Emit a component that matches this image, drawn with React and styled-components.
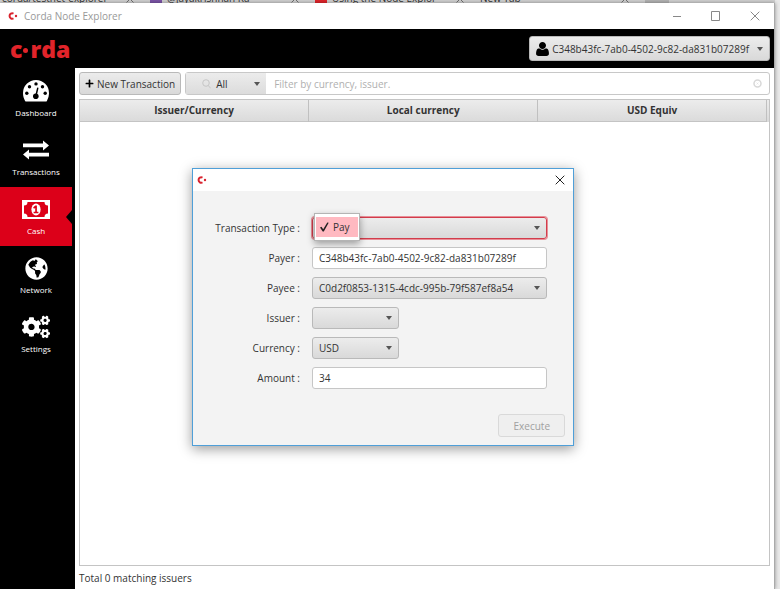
import React from 'react';
import styled, { createGlobalStyle, css } from 'styled-components';
import { FaCogs, FaGlobeAmericas, FaPlus } from 'react-icons/fa';

const PARTY = 'C348b43fc-7ab0-4502-9c82-da831b07289f';
const PAYEE = 'C0d2f0853-1315-4cdc-995b-79f587ef8a54';

const GaugeIcon = () => (
  <svg width="26" height="22" viewBox="0 0 26 22">
    <path
      fill="#fff"
      d="M13 0a13 13 0 0 0-13 13c0 3 .8 5.600 2.100 7.900.3.500.7.700 1.200.700h19.400c.5 0 .9-.2 1.200-.7A14.500 14.500 0 0 0 26 13 13 13 0 0 0 13 0z"
    />
    <circle cx="3.800" cy="13.300" r="1.700" />
    <circle cx="6.500" cy="6.700" r="1.700" />
    <circle cx="13" cy="3.900" r="1.700" />
    <circle cx="19.500" cy="6.700" r="1.700" />
    <circle cx="22.200" cy="13.300" r="1.700" />
    <circle cx="12.800" cy="16.200" r="2.800" />
    <path d="M13 15.500 14.700 8.300" stroke="#000" strokeWidth="1.500" strokeLinecap="round" />
  </svg>
);

const ExchangeIcon = () => (
  <svg width="26" height="20" viewBox="0 0 26 20" fill="#fff">
    <path d="M0 3.600h20V.5l6 5-6 5V7.200H0z" />
    <path d="M26 12.800H6V9.600l-6 5 6 5v-3.200h20z" />
  </svg>
);

const CashIcon = () => (
  <svg width="28" height="19" viewBox="0 0 28 19">
    <path fill="#fff" d="M0 0h28v19H0z" />
    <path fill="#dc0019" d="M5.500 2h17a3.500 3.500 0 0 0 3.500 3.500v8a3.500 3.500 0 0 0-3.500 3.500h-17A3.500 3.500 0 0 0 2 13.500v-8A3.500 3.500 0 0 0 5.500 2z" />
    <ellipse cx="14" cy="9.500" rx="4.600" ry="6" fill="#fff" />
    <path fill="#dc0019" d="M13.200 5.500h1.700v6.200h1.500v1.500h-4.800v-1.500h1.600V7.900l-1.200.9-.9-1.200z" />
  </svg>
);

const UserIcon = () => (
  <svg width="13" height="14" viewBox="0 128 1408 1536">
    <path d="M1408 1405q0 120-73 189.500t-194 69.500h-874q-121 0-194-69.500t-73-189.500q0-53 3.500-103.500t14-109 26.500-108.500 43-97.500 62-81 85.500-53.500 111.500-20q9 0 42 21.500t74.500 48 108 48 133.500 21.500 133.500-21.500 108-48 74.500-48 42-21.500q61 0 111.500 20t85.500 53.500 62 81 43 97.500 26.500 108.500 14 109 3.500 103.500zM1088 512q0 159-112.500 271.500t-271.500 112.500-271.500-112.500-112.500-271.500 112.500-271.500 271.500-112.500 271.500 112.500 112.500 271.500z" />
  </svg>
);

const SearchIcon = () => (
  <svg width="9" height="10" viewBox="0 0 9 10" fill="none" stroke="#c6c6c6">
    <circle cx="4" cy="4" r="3.300" />
    <path d="m6.300 6.500 2.300 2.800" />
  </svg>
);

const ClearIcon = () => (
  <svg width="9" height="9" viewBox="0 0 9 9" fill="none" stroke="#d8d8d8">
    <circle cx="4.500" cy="4.500" r="3.500" strokeWidth="1.500" />
    <path d="m3.500 3.500 2 2m0-2-2 2" strokeWidth=".5" />
  </svg>
);

const CordaMark = () => (
  <svg width="10" height="8" viewBox="0 0 10 8">
    <path d="M5.500 1.600A2.700 2.700 0 1 0 5.500 6.400" fill="none" stroke="#d9232e" strokeWidth="2" />
    <circle cx="8" cy="4" r="1.200" fill="#d9232e" />
  </svg>
);

const CheckIcon = () => (
  <svg width="9" height="10" viewBox="0 0 9 10">
    <path d="M0 5.600 1.500 4.800 3.200 7.200 7.300.400 8.700.700 3.800 9.600H2.700z" fill="#222" />
  </svg>
);

const MinimizeIcon = () => (
  <svg width="10" height="10" viewBox="0 0 10 10">
    <path d="M1 5.500h8" stroke="#888" />
  </svg>
);

const MaximizeIcon = () => (
  <svg width="10" height="10" viewBox="0 0 10 10">
    <path d="M.5.5h8v9h-8z" fill="none" stroke="#888" />
  </svg>
);

const CloseIcon = ({ color = '#888', size = 10 }) => (
  <svg width={size} height={size} viewBox="0 0 10 10">
    <path d="m.7.7 8.600 8.600m0-8.600L.7 9.300" stroke={color} />
  </svg>
);

const tabs = [
  { label: 'corda/testnet-explorer', icon: 'transparent' },
  { label: '@jayakrishnan Ka', icon: '#7d55a8' },
  { label: 'Using the Node Explor', icon: '#e1242a' },
  { label: 'New Tab' },
];

const menu = [
  { label: 'Dashboard', icon: <GaugeIcon /> },
  { label: 'Transactions', icon: <ExchangeIcon /> },
  { label: 'Cash', icon: <CashIcon />, active: true },
  { label: 'Network', icon: <FaGlobeAmericas size={23} /> },
  { label: 'Settings', icon: <FaCogs size={28} /> },
];

const App = () => {
  return (
    <>
      <GlobalStyle />
      <Desktop>
        <BrowserTabs aria-hidden="true">
          {tabs.map(({ label, icon }) => (
            <BrowserTab key={label}>
              {icon && <TabIcon $color={icon} />}
              {label}
              <TabClose>
                <CloseIcon color="#555" size={8} />
              </TabClose>
            </BrowserTab>
          ))}
          <NewTab />
        </BrowserTabs>
        <Window>
          <TitleBar>
            <CordaMark />
            <Title>Corda Node Explorer</Title>
            <WindowButton aria-label="Minimize">
              <MinimizeIcon />
            </WindowButton>
            <WindowButton aria-label="Maximize">
              <MaximizeIcon />
            </WindowButton>
            <WindowButton aria-label="Close">
              <CloseIcon />
            </WindowButton>
          </TitleBar>
          <Header>
            <Logo>
              c<LogoDot />
              rda
            </Logo>
            <PartyButton>
              <UserIcon />
              {PARTY}
              <Arrow />
            </PartyButton>
          </Header>
          <Body>
            <Sidebar>
              {menu.map(({ label, icon, active }) => (
                <MenuLink key={label} href="#" $active={active}>
                  <MenuIcon>{icon}</MenuIcon>
                  {label}
                </MenuLink>
              ))}
            </Sidebar>
            <Main>
              <Toolbar>
                <Button>
                  <FaPlus size={9} color="#000" />
                  New Transaction
                </Button>
                <SearchBox>
                  <Category>
                    <SearchIcon />
                    All
                    <Arrow />
                  </Category>
                  <SearchInput
                    aria-label="Filter"
                    placeholder="Filter by currency, issuer."
                  />
                  <ClearIcon />
                </SearchBox>
              </Toolbar>
              <TableFrame>
                <Table>
                  <thead>
                    <tr>
                      <th>Issuer/Currency</th>
                      <th>Local currency</th>
                      <th>USD Equiv</th>
                    </tr>
                  </thead>
                  <tbody />
                </Table>
              </TableFrame>
              <Status>Total 0 matching issuers</Status>
            </Main>
          </Body>
        </Window>
        <Dialog role="dialog" aria-label="New Transaction">
          <DialogTitle>
            <CordaMark />
            <DialogClose aria-label="Close">
              <CloseIcon color="#222" />
            </DialogClose>
          </DialogTitle>
          <Form onSubmit={(e) => e.preventDefault()}>
            <Label htmlFor="type">Transaction Type :</Label>
            <Field>
              <Select id="type" $focused defaultValue="Pay">
                <option>Pay</option>
              </Select>
              <FieldArrow />
              <Popup>
                <PopupItem>
                  <CheckIcon />
                  Pay
                </PopupItem>
              </Popup>
            </Field>
            <Label htmlFor="payer">Payer :</Label>
            <Input id="payer" defaultValue={PARTY} />
            <Label htmlFor="payee">Payee :</Label>
            <Field>
              <Select id="payee">
                <option>{PAYEE}</option>
              </Select>
              <FieldArrow />
            </Field>
            <Label htmlFor="issuer">Issuer :</Label>
            <Field $short>
              <Select id="issuer">
                <option></option>
              </Select>
              <FieldArrow />
            </Field>
            <Label htmlFor="currency">Currency :</Label>
            <Field $short>
              <Select id="currency">
                <option>USD</option>
              </Select>
              <FieldArrow />
            </Field>
            <Label htmlFor="amount">Amount :</Label>
            <Input id="amount" defaultValue="34" />
            <Actions>
              <ExecuteButton disabled>Execute</ExecuteButton>
            </Actions>
          </Form>
        </Dialog>
      </Desktop>
    </>
  );
};

const GlobalStyle = createGlobalStyle`
  * {
    box-sizing: border-box;
  }
  body {
    margin: 0;
    color: #333;
    font: 10px/16px 'Open Sans', 'Noto Sans', sans-serif;
  }
  button, input, select {
    margin: 0;
    color: inherit;
    font: inherit;
  }
  svg {
    display: block;
    flex: none;
  }
`;

const raised = css`
  background: linear-gradient(#ececec, #d9d9d9);
  border: 1px solid #b9b9b9;
  border-radius: 3px;
`;

const Desktop = styled.div`
  position: relative;
  min-height: 100vh;
  display: flex;
  flex-direction: column;
  padding-right: 5px;
  background: #e9e9e9;
  overflow: hidden;
`;

const BrowserTabs = styled.div`
  height: 3px;
  display: flex;
  align-items: flex-end;
  margin-left: -15px;
  overflow: hidden;
  background: #d2d2d2;
`;

const BrowserTab = styled.span`
  flex: 0 0 165px;
  display: flex;
  align-items: flex-end;
  padding-right: 16px;
  line-height: 9px;
  white-space: nowrap;
`;

const TabIcon = styled.span`
  width: 12px;
  height: 3px;
  margin-right: 5px;
  background: ${(props) => props.$color};
`;

const TabClose = styled.span`
  margin-left: auto;
`;

const NewTab = styled.span`
  width: 24px;
  height: 3px;
  background: #b4b4b4;
`;

const Window = styled.div`
  flex: 1;
  display: flex;
  flex-direction: column;
  background: #fff;
  border-right: 1px solid #aaa;
  box-shadow: 0 0 4px rgba(0, 0, 0, 0.4);
`;

const TitleBar = styled.div`
  height: 26px;
  display: flex;
  align-items: center;
  padding-left: 8px;
`;

const Title = styled.span`
  flex: 1;
  margin-left: 6px;
  color: #999;
`;

const WindowButton = styled.button`
  width: 39px;
  height: 24px;
  padding: 0;
  display: grid;
  place-items: center;
  background: none;
  border: 0;
`;

const Header = styled.header`
  height: 39px;
  display: flex;
  align-items: center;
  justify-content: space-between;
  padding: 0 4px 0 10px;
  background: #000;
`;

const Logo = styled.div`
  display: flex;
  align-items: center;
  color: #e1242a;
  font-size: 23px;
  font-weight: 800;
  line-height: 32px;
`;

const LogoDot = styled.span`
  width: 5px;
  height: 5px;
  margin: 4px 2px 0 1px;
  border-radius: 50%;
  background: currentColor;
`;

const Arrow = styled.span`
  border: 3px solid transparent;
  border-top: 4px solid #555;
  border-bottom: 0;
`;

const PartyButton = styled.button`
  ${raised}
  height: 25px;
  display: flex;
  align-items: center;
  gap: 3px;
  padding: 0 6px;
  ${Arrow} {
    margin-left: 5px;
  }
`;

const Body = styled.div`
  flex: 1;
  display: flex;
`;

const Sidebar = styled.nav`
  width: 75px;
  padding: 1px 3px 0 0;
  background: #000;
`;

const MenuLink = styled.a`
  position: relative;
  height: 59px;
  display: flex;
  flex-direction: column;
  align-items: center;
  padding-top: 7px;
  background: ${(props) => (props.$active ? '#dc0019' : 'none')};
  color: #fff;
  font-size: 8px;
  line-height: 14px;
  text-decoration: none;
  &::after {
    content: '';
    display: ${(props) => (props.$active ? 'block' : 'none')};
    position: absolute;
    right: 0;
    top: 23px;
    border: 7px solid transparent;
    border-right: 6px solid #000;
    border-left: 0;
  }
`;

const MenuIcon = styled.span`
  height: 30px;
  display: flex;
  align-items: center;
`;

const Main = styled.main`
  flex: 1;
  min-width: 0;
  display: flex;
  flex-direction: column;
  padding: 4px 4px 3px;
`;

const Toolbar = styled.div`
  display: flex;
  gap: 4px;
  margin-bottom: 4px;
`;

const Button = styled.button`
  ${raised}
  height: 23px;
  display: flex;
  align-items: center;
  gap: 3px;
  padding: 0 5px;
  white-space: nowrap;
`;

const SearchBox = styled.div`
  flex: 1;
  height: 23px;
  display: flex;
  align-items: center;
  padding-right: 7px;
  border: 1px solid #c8c8c8;
  border-radius: 3px;
`;

const Category = styled.button`
  width: 80px;
  height: 21px;
  display: flex;
  align-items: center;
  gap: 5px;
  padding: 0 6px 0 16px;
  background: linear-gradient(#ececec, #dcdcdc);
  border: 0;
  ${Arrow} {
    margin-left: auto;
  }
`;

const SearchInput = styled.input`
  flex: 1;
  min-width: 0;
  padding: 0 8px;
  background: none;
  border: 0;
  &::placeholder {
    color: #b0b0b0;
  }
`;

const TableFrame = styled.div`
  flex: 1;
  padding-right: 2px;
  background: linear-gradient(#ececec, #dadada) top / 100% 22px no-repeat;
  border: 1px solid #c4c4c4;
`;

const Table = styled.table`
  width: 100%;
  table-layout: fixed;
  border-collapse: collapse;
  border-bottom: 1px solid #c4c4c4;
  th {
    height: 21px;
    padding: 0;
    border-right: 1px solid #c0c0c0;
  }
`;

const Status = styled.footer`
  padding-top: 4px;
`;

const Dialog = styled.section`
  position: absolute;
  left: 192px;
  top: 168px;
  width: 382px;
  background: #f3f3f3;
  border: 1px solid #4f9fd8;
  box-shadow: 0 3px 12px rgba(0, 0, 0, 0.4);
`;

const DialogTitle = styled.div`
  height: 22px;
  display: flex;
  align-items: center;
  justify-content: space-between;
  padding: 0 8px 0 4px;
  background: #fff;
`;

const DialogClose = styled.button`
  padding: 0;
  background: none;
  border: 0;
`;

const Form = styled.form`
  display: grid;
  grid-template-columns: 107px 1fr;
  gap: 8px 12px;
  align-items: center;
  padding: 26px 26px 8px 0;
`;

const Label = styled.label`
  text-align: right;
  white-space: nowrap;
`;

const Field = styled.div`
  position: relative;
  width: ${(props) => (props.$short ? '87px' : 'auto')};
`;

const Select = styled.select`
  ${raised}
  appearance: none;
  display: block;
  width: 100%;
  height: 22px;
  padding: 0 6px;
  ${(props) =>
    props.$focused &&
    css`
      border-color: #d23c4b;
      box-shadow: 0 0 0 1px #e88f98;
    `}
`;

const FieldArrow = styled(Arrow)`
  position: absolute;
  right: 7px;
  top: 9px;
  pointer-events: none;
`;

const Input = styled.input`
  width: 100%;
  height: 22px;
  padding: 0 6px;
  background: #fff;
  border: 1px solid #c6c6c6;
  border-radius: 3px;
`;

const Popup = styled.div`
  position: absolute;
  left: 2px;
  top: -4px;
  padding: 3px 1px;
  background: #fff;
  border: 1px solid #b4b4b4;
  box-shadow: 0 3px 7px rgba(0, 0, 0, 0.35);
`;

const PopupItem = styled.div`
  width: 42px;
  height: 20px;
  display: flex;
  align-items: center;
  gap: 4px;
  padding-left: 4px;
  background: #ffb9c1;
`;

const Actions = styled.div`
  grid-column: 1 / -1;
  display: flex;
  justify-content: flex-end;
  margin: 17px -18px 0 0;
`;

const ExecuteButton = styled(Button)`
  padding: 0 14px;
  background: #efefef;
  border-color: #d9d9d9;
  color: #a0a0a0;
`;

export default App;
